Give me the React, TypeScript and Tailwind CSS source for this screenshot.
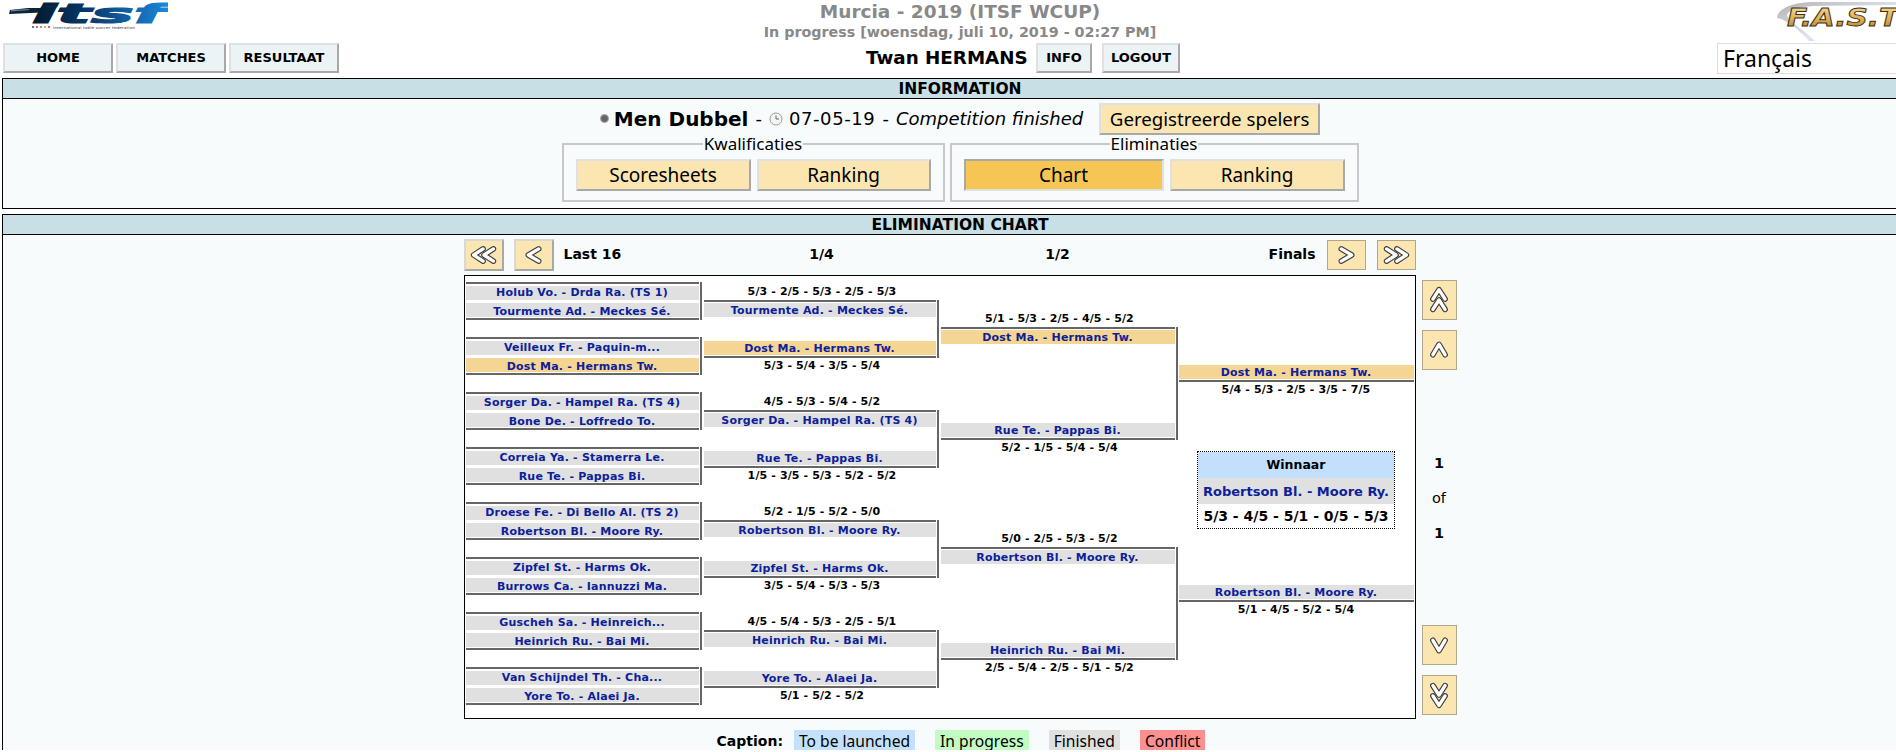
const verdana = "font-['DejaVu_Sans',sans-serif]";

type Entrant = { name: string; won?: boolean; leading?: string };

const round16: [string, string, boolean?][] = [
  ["Holub Vo. - Drda Ra. (TS 1)", "Tourmente Ad. - Meckes Sé."],
  ["Veilleux Fr. - Paquin-m...", "Dost Ma. - Hermans Tw.", true],
  ["Sorger Da. - Hampel Ra. (TS 4)", "Bone De. - Loffredo To."],
  ["Correia Ya. - Stamerra Le.", "Rue Te. - Pappas Bi."],
  ["Droese Fe. - Di Bello Al. (TS 2)", "Robertson Bl. - Moore Ry."],
  ["Zipfel St. - Harms Ok.", "Burrows Ca. - Iannuzzi Ma."],
  ["Guscheh Sa. - Heinreich...", "Heinrich Ru. - Bai Mi."],
  ["Van Schijndel Th. - Cha...", "Yore To. - Alaei Ja."],
];

const quarters = [
  { top: "5/3 - 2/5 - 5/3 - 2/5 - 5/3", a: "Tourmente Ad. - Meckes Sé.", b: "Dost Ma. - Hermans Tw.", bWon: true, bottom: "5/3 - 5/4 - 3/5 - 5/4" },
  { top: "4/5 - 5/3 - 5/4 - 5/2", a: "Sorger Da. - Hampel Ra. (TS 4)", b: "Rue Te. - Pappas Bi.", bottom: "1/5 - 3/5 - 5/3 - 5/2 - 5/2" },
  { top: "5/2 - 1/5 - 5/2 - 5/0", a: "Robertson Bl. - Moore Ry.", b: "Zipfel St. - Harms Ok.", bottom: "3/5 - 5/4 - 5/3 - 5/3" },
  { top: "4/5 - 5/4 - 5/3 - 2/5 - 5/1", a: "Heinrich Ru. - Bai Mi.", b: "Yore To. - Alaei Ja.", bottom: "5/1 - 5/2 - 5/2" },
];

const semis = [
  { top: "5/1 - 5/3 - 2/5 - 4/5 - 5/2", a: "Dost Ma. - Hermans Tw.", aWon: true, b: "Rue Te. - Pappas Bi.", bottom: "5/2 - 1/5 - 5/4 - 5/4" },
  { top: "5/0 - 2/5 - 5/3 - 5/2", a: "Robertson Bl. - Moore Ry.", b: "Heinrich Ru. - Bai Mi.", bottom: "2/5 - 5/4 - 2/5 - 5/1 - 5/2" },
];

function Cell({ name, won, leading }: Entrant) {
  return (
    <div
      className={`h-[14px] shrink-0 text-center text-[11px] font-bold tracking-[0.2px] whitespace-nowrap text-[#0c2199] ${
        leading ?? "leading-[15px]"
      } ${won ? "bg-[#f5d594]" : "bg-[#e0e0e0]"}`}
    >
      {name}
    </div>
  );
}

// a score above its line sits lower in its row, one below it sits higher
function Score({ value, above }: { value: string; above?: boolean }) {
  return (
    <div
      className={`h-[18px] text-center text-[11px] font-bold tracking-[0.12px] whitespace-nowrap text-black ${
        above ? "leading-[20px]" : "leading-[16px]"
      }`}
    >
      {value}
    </div>
  );
}

function Pair({
  a,
  b,
  height,
  width,
  paddingTop,
}: {
  a: Entrant;
  b: Entrant;
  height: string;
  width: string;
  paddingTop: string;
}) {
  return (
    <div className={`flex ${height}`}>
      <div className={`${width} ${paddingTop} flex flex-col justify-between border-y-2 border-[#666] pb-px`}>
        <Cell {...a} />
        <Cell {...b} />
      </div>
      <div className="ml-px w-[2px] bg-[#666]" />
    </div>
  );
}

function Finalist({ name, won, score }: { name: string; won?: boolean; score: string }) {
  return (
    <div>
      <div className="border-b-2 border-[#666] pb-px">
        <Cell name={name} won={won} />
      </div>
      <Score value={score} />
    </div>
  );
}

function Chevrons({ double, className }: { double?: boolean; className?: string }) {
  // points left; the other directions are rotated by the caller
  const arms = double
    ? ["M26 9.5 L16 16 L26 22.5", "M15 9.5 L5 16 L15 22.5"]
    : ["M21 9.5 L10 16 L21 22.5"];
  return (
    <svg viewBox="0 0 32 32" className={`h-[30px] w-[30px] ${className ?? ""}`}>
      {arms.map((d) => (
        <path key={d} d={d} fill="none" stroke="#3c3c3c" strokeWidth="6" strokeLinejoin="round" strokeLinecap="round" />
      ))}
      {arms.map((d) => (
        <path key={d} d={d} fill="none" stroke="#fff" strokeWidth="3.6" strokeLinejoin="round" strokeLinecap="round" />
      ))}
    </svg>
  );
}

function ItsfLogo() {
  return (
    <svg viewBox="0 0 160 28" className="h-[28px] w-[160px]">
      <defs>
        <linearGradient id="itsfBlue" x1="0" y1="0" x2="1" y2="0">
          <stop offset="0" stopColor="#04192e" />
          <stop offset="0.4" stopColor="#07396b" />
          <stop offset="1" stopColor="#1f8fe6" />
        </linearGradient>
      </defs>
      <path d="M2 8 L20 6 L46 6 L44 10 L1 12 Z" fill="#0d2338" />
      <path d="M3 8 L20 7 L22 8 L3 9.5 Z" fill="#5f7f9c" />
      <text
        x="24"
        y="21"
        textLength="133"
        lengthAdjust="spacingAndGlyphs"
        fontFamily="'DejaVu Sans', sans-serif"
        fontWeight="700"
        fontStyle="italic"
        fontSize="26"
        fill="url(#itsfBlue)"
        stroke="url(#itsfBlue)"
        strokeWidth="1.2"
      >
        itsf
      </text>
      <circle cx="25" cy="25" r="1" fill="#2244aa" />
      <circle cx="29" cy="25" r="1" fill="#cc3333" />
      <circle cx="33" cy="25" r="1" fill="#33aa44" />
      <circle cx="37" cy="25" r="1" fill="#dd8822" />
      <circle cx="41" cy="25" r="1" fill="#cc3333" />
      <text
        x="45"
        y="26.5"
        textLength="82"
        lengthAdjust="spacingAndGlyphs"
        fontFamily="'DejaVu Sans', sans-serif"
        fontSize="3.6"
        fill="#444"
      >
        international table soccer federation
      </text>
    </svg>
  );
}

function FastLogo() {
  return (
    <svg viewBox="0 0 119 40" className="h-[40px] w-[119px]">
      <defs>
        <linearGradient id="fastGold" x1="0" y1="0" x2="0" y2="1">
          <stop offset="0" stopColor="#f4dfa0" />
          <stop offset="0.55" stopColor="#dcae52" />
          <stop offset="1" stopColor="#a87a25" />
        </linearGradient>
        <linearGradient id="fastSwoosh" x1="0" y1="0" x2="1" y2="1">
          <stop offset="0" stopColor="#b4b4b4" />
          <stop offset="0.6" stopColor="#dfe6f2" />
          <stop offset="1" stopColor="#8fb0ea" />
        </linearGradient>
      </defs>
      <path d="M119 1 L34 1 C12 2 0 9 0 17 C4 17 18 24 32 40 L38 40 C26 28 11 20 10 14 C12 8 22 6 36 5 L119 4 Z" fill="url(#fastSwoosh)" />
      <text
        x="10"
        y="25"
        textLength="112"
        lengthAdjust="spacingAndGlyphs"
        fontFamily="'DejaVu Sans', sans-serif"
        fontWeight="700"
        fontStyle="italic"
        fontSize="24"
        fill="url(#fastGold)"
        stroke="#3f3015"
        strokeWidth="0.9"
      >
        F.A.S.T
      </text>
    </svg>
  );
}

function NavButton({ label, width }: { label: string; width: string }) {
  return (
    <button
      className={`${width} h-[30px] border-2 border-t-[#e0e0e0] border-l-[#e0e0e0] border-r-[#a8a8a8] border-b-[#a8a8a8] bg-[#ecf3f6] text-[13px] font-bold text-black ${verdana}`}
    >
      {label}
    </button>
  );
}

function ActionButton({ label, width, active }: { label: string; width: string; active?: boolean }) {
  return (
    <button
      className={`${width} h-[32px] border-2 text-[19px] text-black ${
        active
          ? "border-t-[#a8a8a8] border-l-[#a8a8a8] border-r-[#e0e0e0] border-b-[#e0e0e0] bg-[#f6c655]"
          : "border-t-[#e0e0e0] border-l-[#e0e0e0] border-r-[#a8a8a8] border-b-[#a8a8a8] bg-[#fbe5b0]"
      }`}
    >
      {label}
    </button>
  );
}

function Group({ legend, width, children }: { legend: string; width: string; children: React.ReactNode }) {
  return (
    <fieldset className={`${width} flex gap-[6px] border-2 border-[#c8c8c8] px-3 pb-[9px]`}>
      <legend className="mx-auto px-px text-[17px] leading-[18px] text-black">{legend}</legend>
      <div className="mt-[6px] flex gap-[6px]">{children}</div>
    </fieldset>
  );
}

function PanelHeader({ title }: { title: string }) {
  return (
    <div className={`h-[20px] border-b border-black bg-[#c8dfe5] text-center text-[15.5px] font-bold leading-[20px] text-black ${verdana}`}>
      {title}
    </div>
  );
}

function Caption({ label, color }: { label: string; color: string }) {
  return <span className={`h-[22px] px-[5px] text-[15.6px] leading-[22px] text-black ${color}`}>{label}</span>;
}

const backButton =
  "flex h-[32px] w-[40px] items-center justify-center border-2 border-t-[#d8d8d8] border-l-[#d8d8d8] border-r-[#a8a8a8] border-b-[#a8a8a8] bg-[#fbe5b0]";
const forwardButton = "flex h-[30px] w-[39px] items-center justify-center border border-[#b0a68c] bg-[#fbe5b0]";
const pageButton = "flex h-[40px] items-center justify-center border border-[#b0a68c] bg-[#fbe5b0]";

export default function App() {
  return (
    <div className="h-[752px] w-[1896px] overflow-hidden bg-white font-['Noto_Sans',sans-serif]">
      <div className="w-[1920px]">
        {/* top of the page */}
        <div className="flex h-[43px]">
          <div className="w-[700px] pt-[2px] pl-[8px]">
            <ItsfLogo />
          </div>
          <div className={`w-[520px] text-center font-bold text-[#888] ${verdana}`}>
            <div className="text-[18.5px] leading-[24px]">Murcia - 2019 (ITSF WCUP)</div>
            <div className="text-[14.3px] leading-[17px]">In progress [woensdag, juli 10, 2019 - 02:27 PM]</div>
          </div>
          <div className="ml-auto w-[143px] pt-px">
            <FastLogo />
          </div>
        </div>
        <div className="flex h-[30px] items-center">
          <div className="flex w-[866px] gap-[3px] pl-[3px]">
            <NavButton label="HOME" width="w-[110px]" />
            <NavButton label="MATCHES" width="w-[110px]" />
            <NavButton label="RESULTAAT" width="w-[110px]" />
          </div>
          <div className={`w-[170px] text-[18.3px] font-bold whitespace-nowrap text-black ${verdana}`}>Twan HERMANS</div>
          <div className="flex gap-[10px]">
            <NavButton label="INFO" width="w-[56px]" />
            <NavButton label="LOGOUT" width="w-[78px]" />
          </div>
          <div className="ml-auto flex h-[31px] w-[203px] items-center border border-[#ddd] bg-white pl-[5px] text-[23px] leading-[28px] text-black">
            Français
          </div>
        </div>

        {/* information panel */}
        <div className="mt-[5px] ml-[2px] w-[1916px] border border-black">
          <PanelHeader title="INFORMATION" />
          <div className="h-[109px] bg-[#f7fbfc]">
            <div className={`flex h-[36px] items-center justify-center pt-[3px] text-[18px] text-black ${verdana}`}>
              <span className="mr-[5px] h-[9px] w-[9px] rounded-full border border-[#aaa] bg-[#666]" />
              <span className="text-[20px] font-bold">Men Dubbel</span>
              <span className="mx-[7px]">-</span>
              <svg viewBox="0 0 14 14" className="mr-[6px] h-[14px] w-[14px]">
                <circle cx="7" cy="7" r="6" fill="#f4f4f4" stroke="#999" />
                <path d="M7 3.5 V7 H10" fill="none" stroke="#666" />
              </svg>
              <span className="tracking-[0.6px]">07-05-19</span>
              <span className="mx-[7px]">-</span>
              <span className="italic">Competition finished</span>
              <button className="ml-[16px] h-[32px] w-[221px] border-2 border-t-[#e0e0e0] border-l-[#e0e0e0] border-r-[#a8a8a8] border-b-[#a8a8a8] bg-[#fbe5b0] font-['Noto_Sans',sans-serif] text-[18.7px]">
                Geregistreerde spelers
              </button>
            </div>
            <div className="flex justify-center gap-[5px]">
              <Group legend="Kwalificaties" width="w-[383px]">
                <ActionButton label="Scoresheets" width="w-[175px]" />
                <ActionButton label="Ranking" width="w-[174px]" />
              </Group>
              <Group legend="Eliminaties" width="w-[408px]">
                <ActionButton label="Chart" width="w-[200px]" active />
                <ActionButton label="Ranking" width="w-[175px]" />
              </Group>
            </div>
          </div>
        </div>

        {/* elimination chart */}
        <div className="mt-[5px] ml-[2px] h-[536px] w-[1916px] overflow-hidden border-x border-t border-black bg-[#f7fbfc]">
          <PanelHeader title="ELIMINATION CHART" />
          <div className={`mx-auto w-[993px] ${verdana}`}>
            <div className="flex h-[40px] w-[952px] items-center text-[14px] leading-[18px] font-bold text-black">
              <div className="flex w-[240px] items-center gap-[10px]">
                <button className={backButton}>
                  <Chevrons double />
                </button>
                <button className={backButton}>
                  <Chevrons />
                </button>
                <span className="pb-[2px]">Last 16</span>
              </div>
              <div className="w-[236px] pb-[2px] text-center">1/4</div>
              <div className="w-[236px] pb-[2px] text-center">1/2</div>
              <div className="flex flex-1 items-center justify-end gap-[11px]">
                <span className="pb-[2px]">Finals</span>
                <button className={forwardButton}>
                  <Chevrons className="rotate-180" />
                </button>
                <button className={forwardButton}>
                  <Chevrons double className="rotate-180" />
                </button>
              </div>
            </div>

            <div className="flex gap-[6px]">
              <div className="flex h-[444px] w-[952px] border border-black bg-white pt-[6px] pl-px">
                <div className="flex w-[238px] flex-col gap-[17px]">
                  {round16.map(([a, b, bWon]) => (
                    <Pair
                      key={a}
                      a={{ name: a, leading: "leading-[13px]" }}
                      b={{ name: b, won: bWon, leading: "leading-[17px]" }}
                      height="h-[38px]"
                      width="w-[233px]"
                      paddingTop="pt-[2px]"
                    />
                  ))}
                </div>
                <div className="flex w-[237px] flex-col gap-[16px]">
                  {quarters.map((m) => (
                    <div key={m.top}>
                      <Score value={m.top} above />
                      <Pair
                        a={{ name: m.a }}
                        b={{ name: m.b, won: m.bWon }}
                        height="h-[58px]"
                        width="w-[232px]"
                        paddingTop="pt-px"
                      />
                      <Score value={m.bottom} />
                    </div>
                  ))}
                </div>
                <div className="flex w-[238px] flex-col gap-[71px] pt-[27px]">
                  {semis.map((m) => (
                    <div key={m.top}>
                      <Score value={m.top} above />
                      <Pair
                        a={{ name: m.a, won: m.aWon }}
                        b={{ name: m.b }}
                        height="h-[113px]"
                        width="w-[234px]"
                        paddingTop="pt-px"
                      />
                      <Score value={m.bottom} />
                    </div>
                  ))}
                </div>
                <div className="flex w-[235px] flex-col pt-[83px]">
                  <Finalist name="Dost Ma. - Hermans Tw." won score="5/4 - 5/3 - 2/5 - 3/5 - 7/5" />
                  <div className="mx-auto mt-[51px] h-[78px] w-[198px] border border-dotted border-black text-center">
                    <div className="h-[26px] bg-[#c4dffb] text-[12.5px] font-bold leading-[26px] text-black">Winnaar</div>
                    <div className="h-[26px] bg-[#e0e0e0] text-[13px] font-bold leading-[27px] whitespace-nowrap text-[#0c2199]">
                      Robertson Bl. - Moore Ry.
                    </div>
                    <div className="h-[24px] text-[14px] font-semibold leading-[25px] whitespace-nowrap text-black">
                      5/3 - 4/5 - 5/1 - 0/5 - 5/3
                    </div>
                  </div>
                  <div className="mt-[56px]">
                    <Finalist name="Robertson Bl. - Moore Ry." score="5/1 - 4/5 - 5/2 - 5/4" />
                  </div>
                </div>
              </div>

              <div className="flex w-[35px] flex-col pt-[5px] pb-[4px]">
                <button className={pageButton}>
                  <Chevrons double className="rotate-90" />
                </button>
                <button className={`mt-[10px] ${pageButton}`}>
                  <Chevrons className="rotate-90" />
                </button>
                <div className="flex flex-1 flex-col items-center justify-center gap-[11px] text-[14.5px] leading-[24px] text-black">
                  <span className="font-bold">1</span>
                  <span>of</span>
                  <span className="font-bold">1</span>
                </div>
                <button className={pageButton}>
                  <Chevrons className="-rotate-90" />
                </button>
                <button className={`mt-[10px] ${pageButton}`}>
                  <Chevrons double className="-rotate-90" />
                </button>
              </div>
            </div>

            <div className="mt-[10px] flex items-center justify-center gap-[20px] pl-[2px]">
              <div className="flex items-center gap-[11px]">
                <span className="text-[14px] font-bold text-black">Caption:</span>
                <span className="font-['Noto_Sans',sans-serif]">
                  <Caption label="To be launched" color="bg-[#c4e1fc]" />
                </span>
              </div>
              <span className="font-['Noto_Sans',sans-serif]">
                <Caption label="In progress" color="bg-[#c1fcc1]" />
              </span>
              <span className="font-['Noto_Sans',sans-serif]">
                <Caption label="Finished" color="bg-[#e0e0e0]" />
              </span>
              <span className="font-['Noto_Sans',sans-serif]">
                <Caption label="Conflict" color="bg-[#fc9090]" />
              </span>
            </div>
          </div>
        </div>
      </div>
    </div>
  );
}
